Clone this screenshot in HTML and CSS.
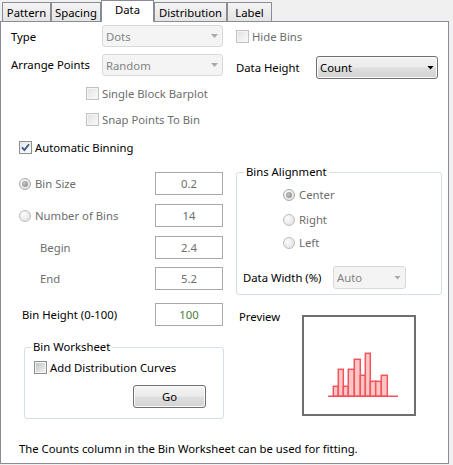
FILE: index.html
```html
<!DOCTYPE html>
<html>
<head>
<meta charset="utf-8">
<link rel="stylesheet" href="styles.css">
</head>
<body>
<div class="tabs">
  <div class="tab tab-pattern">Pattern</div>
  <div class="tab tab-spacing">Spacing</div>
  <div class="tab tab-data">Data</div>
  <div class="tab tab-dist">Distribution</div>
  <div class="tab tab-label">Label</div>
</div>
<div class="panel">
  <div class="row r1">
    <span class="lbl">Type</span>
    <div class="select w-main"><span>Dots</span><i class="arrow"></i></div>
    <div class="check dis hide-bins"><span class="box"></span>Hide Bins</div>
  </div>
  <div class="row r2">
    <span class="lbl">Arrange Points</span>
    <div class="select w-main"><span>Random</span><i class="arrow"></i></div>
    <div class="dh">
      <span class="dh-lbl">Data Height</span>
      <div class="select on w-count"><span>Count</span><i class="arrow"></i></div>
    </div>
  </div>
  <div class="check dis r3"><span class="box"></span>Single Block Barplot</div>
  <div class="check dis r4"><span class="box"></span>Snap Points To Bin</div>
  <div class="check r5"><span class="box checked"><svg width="11" height="11" viewBox="0 0 11 11"><path d="M2 5.3 L4.4 8 L9 2.2" fill="none" stroke="#3f5788" stroke-width="1.8"/></svg></span>Automatic Binning</div>

  <div class="cols">
    <div class="col-left">
      <div class="frow">
        <span class="fl dis"><span class="radio on"></span>Bin Size</span>
        <div class="input">0.2</div>
      </div>
      <div class="frow fr2">
        <span class="fl dis"><span class="radio"></span>Number of Bins</span>
        <div class="input">14</div>
      </div>
      <div class="frow fr3">
        <span class="fl dis indent">Begin</span>
        <div class="input">2.4</div>
      </div>
      <div class="frow fr4">
        <span class="fl dis indent">End</span>
        <div class="input">5.2</div>
      </div>
      <div class="frow fr5">
        <span class="fl bh">Bin Height (0-100)</span>
        <div class="input green">100</div>
      </div>
      <fieldset class="group ws">
        <legend>Bin Worksheet</legend>
        <div class="check ws-check"><span class="box"></span>Add Distribution Curves</div>
        <div class="btn">Go</div>
      </fieldset>
    </div>
    <div class="col-right">
      <fieldset class="group align">
        <legend>Bins Alignment</legend>
        <div class="rrow rr1 dis"><span class="radio on"></span>Center</div>
        <div class="rrow rr2 dis"><span class="radio"></span>Right</div>
        <div class="rrow rr3 dis"><span class="radio"></span>Left</div>
        <div class="dw">
          <span class="dw-lbl">Data Width (%)</span>
          <div class="select w-auto"><span>Auto</span><i class="arrow"></i></div>
        </div>
      </fieldset>
      <div class="preview-row">
        <span class="pv-lbl">Preview</span>
        <div class="preview-box">
          <svg width="110" height="97" viewBox="0 0 110 97">
            <g fill="#ffc6c6" stroke="#f0545c" stroke-width="1.5">
              <rect x="29.3" y="69.3" width="5" height="10"/>
              <rect x="34.3" y="52.3" width="5" height="27"/>
              <rect x="39.3" y="69.3" width="5" height="10"/>
              <rect x="44.3" y="52.3" width="6" height="27"/>
              <rect x="50.3" y="42.3" width="6" height="37"/>
              <rect x="56.3" y="58.3" width="5" height="21"/>
              <rect x="61.3" y="36.3" width="5" height="43"/>
              <rect x="66.3" y="64.3" width="5.4" height="15"/>
              <rect x="71.7" y="64.3" width="5.6" height="15"/>
              <rect x="77.3" y="58.3" width="6" height="21"/>
            </g>
            <line x1="24" y1="79.3" x2="94" y2="79.3" stroke="#f0545c" stroke-width="1.5"/>
          </svg>
        </div>
      </div>
    </div>
  </div>
  <p class="note">The Counts column in the Bin Worksheet can be used for fitting.</p>
</div>
</body>
</html>
```

FILE: styles.css
```css
* { box-sizing: border-box; }
html, body { margin: 0; padding: 0; }
body {
  background: #f0f0f0;
  font-family: "Noto Sans", "Open Sans", sans-serif;
  font-size: 11.3px;
  line-height: 15px;
  color: #000;
  width: 453px;
  height: 465px;
  overflow: hidden;
}

/* tabs */
.tabs { display: flex; align-items: flex-end; height: 21px; padding-left: 2px; }
.tab {
  height: 19px;
  border: 1px solid #898c95;
  border-bottom: none;
  background: linear-gradient(#f4f4f4, #e4e4e4);
  display: flex;
  justify-content: center;
  align-items: center;
}
.tab-pattern { width: 49px; }
.tab-spacing { width: 50px; }
.tab-data {
  width: 53px;
  height: 22px;
  margin-bottom: -1px;
  background: #fff;
  position: relative;
  z-index: 1;
  align-items: flex-start;
  padding-top: 1px;
}
.tab-dist { width: 73px; }
.tab-label { width: 45px; }

/* panel */
.panel {
  width: 449px;
  height: 443px;
  border: 1px solid #898c95;
  background: #fff;
  padding-top: 3px;
}
.row { display: flex; padding-left: 10px; }
.r1 { height: 22px; align-items: center; }
.r2 { margin-top: 7px; height: 25px; align-items: flex-start; }
.r2 .lbl { line-height: 22px; }
.lbl { width: 91px; }

.select {
  height: 22px;
  border: 1px solid #d9d9d9;
  border-radius: 3px;
  background: #f4f4f4;
  color: #838383;
  display: flex;
  align-items: center;
  justify-content: space-between;
  padding: 0 4px 0 3px;
}
.w-main { width: 121px; }
.arrow {
  display: block;
  width: 7px;
  height: 4px;
  background: #a9a9a9;
  clip-path: polygon(0 0, 100% 0, 50% 100%);
}
.select.on {
  border-color: #707070;
  background: linear-gradient(#f3f3f3 0%, #ececec 48%, #dfdfdf 52%, #d2d2d2 100%);
  box-shadow: inset 0 0 0 1px #fafafa;
  color: #000;
  padding-left: 3px;
  padding-right: 3px;
}
.select.on .arrow { background: #000; }
.dh { display: flex; align-items: center; margin-left: 13px; margin-top: 2px; }
.dh-lbl { width: 80px; }
.w-count { width: 122px; height: 23px; }

/* checkboxes */
.check { display: flex; align-items: center; height: 17px; }
.box {
  width: 13px;
  height: 13px;
  flex: none;
  border: 1px solid #8e8f8f;
  background: #f4f4f4;
  margin-right: 3px;
  display: flex;
  align-items: center;
  justify-content: center;
}
.box::before {
  content: "";
  width: 9px;
  height: 9px;
  background: linear-gradient(135deg, #c0c3c6, #f2f2f2);
}
.box.checked { background: linear-gradient(135deg, #e6e8ea, #fbfbfb); }
.box.checked::before { display: none; }
.box svg { display: block; }
.dis { color: #6d6d6d; }
.dis .box { border-color: #c2c2c2; }
.dis .box::before { background: linear-gradient(135deg, #e3e3e3, #f8f8f8); }
.hide-bins { margin-left: 13px; }
.r3 { margin-top: 6px; padding-left: 85px; }
.r4 { margin-top: 9px; padding-left: 85px; }
.r5 { margin-top: 11px; padding-left: 18px; }

/* radios */
.radio {
  width: 12px;
  height: 12px;
  flex: none;
  border-radius: 50%;
  border: 1px solid #bcbcbc;
  background: radial-gradient(circle at 35% 35%, #fdfdfd, #dcdcdc);
  display: flex;
  align-items: center;
  justify-content: center;
  margin-right: 4px;
}
.radio.on { border-color: #a9a9a9; }
.radio.on::before {
  content: "";
  width: 6px;
  height: 6px;
  border-radius: 50%;
  background: radial-gradient(circle at 40% 40%, #c4c4c4, #808080);
}

/* columns */
.cols { display: flex; margin-top: 9px; }
.col-left { width: 235px; padding-left: 18px; padding-top: 7px; }
.col-right { width: 206px; }

.frow { display: grid; grid-template-columns: 136px 68px; align-items: center; height: 23px; }
.fr2 { margin-top: 9px; }
.fr3 { margin-top: 9px; }
.fr4 { margin-top: 8px; }
.fr5 { margin-top: 13px; }
.fl { display: flex; align-items: center; }
.indent { padding-left: 21px; }
.bh { padding-left: 3px; }
.input {
  width: 68px;
  height: 23px;
  border: 1px solid #a9a9a9;
  background: #fff;
  color: #6d6d6d;
  text-align: center;
  line-height: 21px;
}
.input.green { color: #4a7c32; }

/* group boxes */
.group {
  margin: 0;
  padding: 0;
  border: 1px solid #d5dfe5;
  border-radius: 3px;
  min-inline-size: 0;
}
.group legend { padding: 0 2px; line-height: 14px; }
.align { width: 206px; padding-bottom: 5px; }
.align legend { margin-left: 7px; }
.rrow { display: flex; align-items: center; height: 17px; padding-left: 46px; }
.rr1 { margin-top: 7px; }
.rr2 { margin-top: 8px; }
.rr3 { margin-top: 6px; }
.dw { display: flex; align-items: center; margin-top: 15px; padding-left: 6px; }
.dw-lbl { width: 90px; }
.w-auto { width: 73px; height: 23px; }

.ws { width: 200px; margin-left: 5px; margin-top: 14px; padding-bottom: 10px; }
.ws legend { margin-left: 6px; }
.ws-check { margin-top: 5px; padding-left: 9px; }
.btn {
  width: 73px;
  height: 23px;
  margin-top: 9px;
  margin-left: 108px;
  border: 1px solid #707070;
  border-radius: 3px;
  background: linear-gradient(#f3f3f3 0%, #ececec 48%, #dfdfdf 52%, #d2d2d2 100%);
  box-shadow: inset 0 0 0 1px #fafafa;
  display: flex;
  align-items: center;
  justify-content: center;
}

/* preview */
.preview-row { display: flex; align-items: flex-start; margin-top: 14px; padding-left: 3px; }
.pv-lbl { width: 63px; }
.preview-box {
  width: 114px;
  height: 101px;
  margin-top: 6px;
  border: 2px solid #6f6f6f;
  background: #fff;
}
.preview-box svg { display: block; }

.note { margin: 22px 0 0 18px; }
```
